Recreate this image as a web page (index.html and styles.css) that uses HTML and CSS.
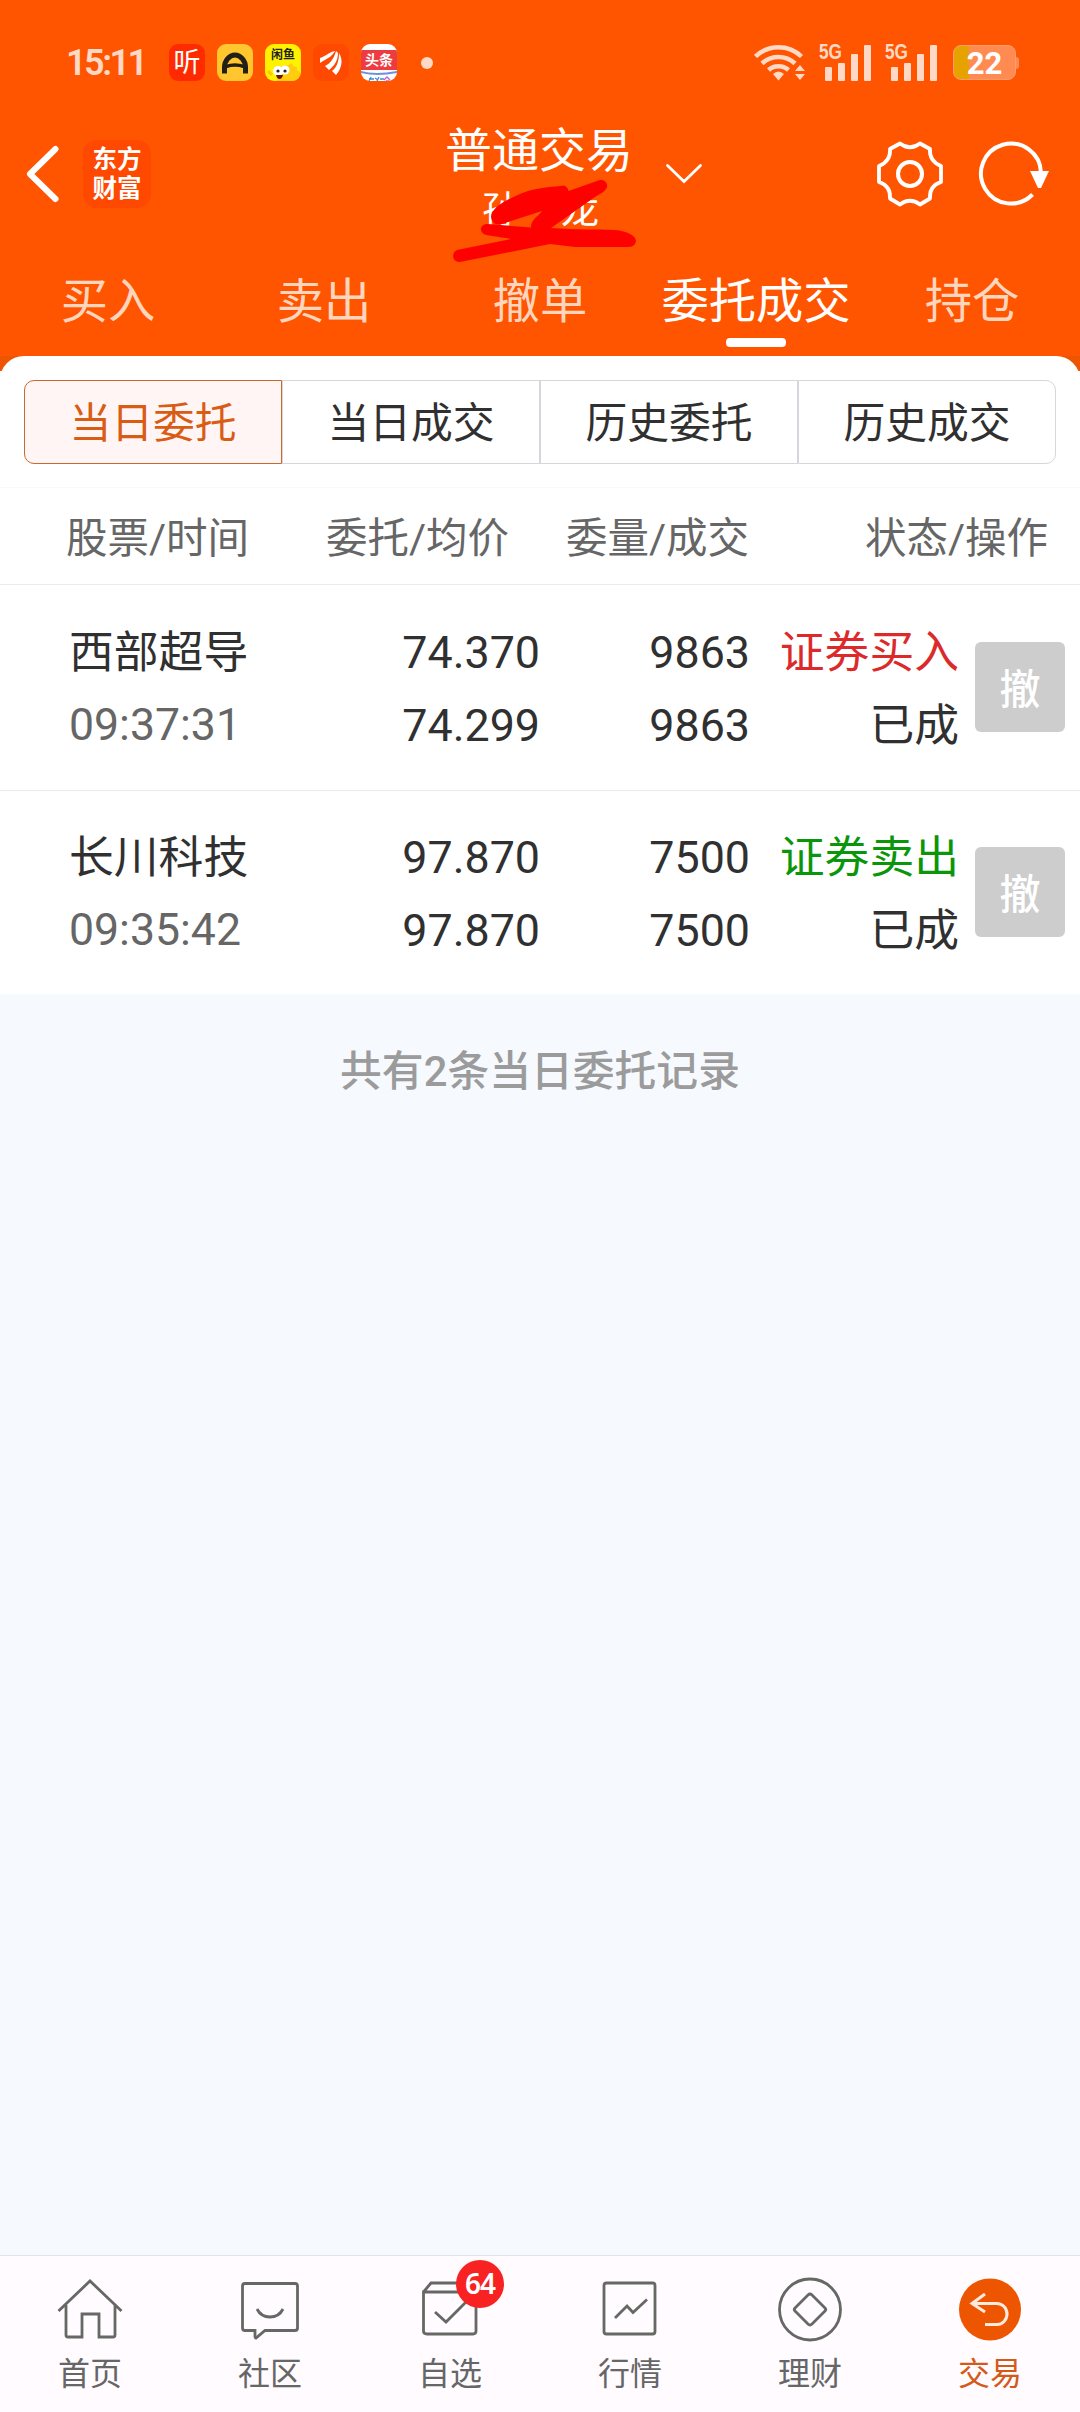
FILE: index.html
```html
<!DOCTYPE html>
<html lang="zh-CN">
<head>
    <meta charset="UTF-8">
    <title>普通交易</title>
    <link rel="stylesheet" href="styles.css">
</head>
<body>
    <div class="app">
        <header class="header">
            <div class="status-bar">
                <span class="clock">15:11</span>
                <div class="app-icons">
                    <span class="app-icon icon-listen">听</span>
                    <svg class="app-icon" viewBox="0 0 36 37">
                        <rect width="36" height="37" fill="#ffc630"/>
                        <path d="M7.500 29.500V23c0-5.500 4.500-12 10.500-12s10.500 6.500 10.500 12v6.500" fill="none" stroke="#222016" stroke-width="5"/>
                        <path d="M9 22.500q9-3 18 0" fill="none" stroke="#222016" stroke-width="3.500"/>
                    </svg>
                    <span class="app-icon icon-fish">
                        <span class="fish-name">闲鱼</span>
                        <svg class="fish-face" viewBox="0 0 36 19">
                            <path d="M12 19C11 7 17 2 24 3l3-2 1 3 4 1v3l3 2v9z" fill="#ffcc10"/>
                            <circle cx="13" cy="9" r="5" fill="#fff"/>
                            <circle cx="20" cy="8" r="4.500" fill="#fff"/>
                            <circle cx="13" cy="9" r="1.600" fill="#222"/>
                            <circle cx="20" cy="9" r="1.600" fill="#222"/>
                            <path d="M11 13h7q-1 4-3.500 4T11 13z" fill="#6b1408"/>
                            <path d="M3 9l4 4" stroke="#ffc400" stroke-width="3"/>
                        </svg>
                    </span>
                    <svg class="app-icon" viewBox="0 0 36 37">
                        <rect width="36" height="37" fill="#ff4800"/>
                        <path d="M7 19v-5c6-2 9-6 15-7-3 6-9 8-15 12z" fill="#fff"/>
                        <path d="M12 22C18 19 21 14 23 7l2 2c0 8-4 13-9 17z" fill="#fff"/>
                        <path d="M19 27c5-4 7-10 7-18 5 8 2 16-3 22z" fill="#fff"/>
                    </svg>
                    <span class="app-icon icon-news">
                        <span class="news-name">头条</span>
                        <svg class="news-wave" viewBox="0 0 36 13">
                            <path d="M0 1q14 4 36 0v2q-20 4-36 0z" fill="#6f8fe0"/>
                            <path d="M8 9h5m-3-2l-2 4m6-3l3 2m1-3l-2 4m3-2h4" stroke="#3b8be0" stroke-width="1.300" fill="none"/>
                            <path d="M23 10l3-3 3 3m-4 1h3" stroke="#c05fd8" stroke-width="1.300" fill="none"/>
                        </svg>
                    </span>
                </div>
                <span class="more-dot"></span>
                <div class="system-icons">
                    <svg class="wifi" viewBox="0 0 51 37">
                        <g fill="none" stroke="#ffd9c5" stroke-width="4.500">
                            <path d="M1.500 12.500a33 33 0 0 1 46 0"/>
                            <path d="M8 19.500a24 24 0 0 1 33 0"/>
                            <path d="M14.500 26a15 15 0 0 1 20 0"/>
                        </g>
                        <path d="M19 30q5.500-5 11 0l-5.500 6.500z" fill="#ffd9c5"/>
                        <path d="M41 27l5-6 5 6zM41 30h10l-5 6z" fill="#ffd9c5"/>
                    </svg>
                    <div class="signal">
                        <span class="network">5G</span>
                        <i class="bar bar-1"></i><i class="bar bar-2"></i><i class="bar bar-3"></i><i class="bar bar-4"></i>
                    </div>
                    <div class="signal">
                        <span class="network">5G</span>
                        <i class="bar bar-1"></i><i class="bar bar-2"></i><i class="bar bar-3"></i><i class="bar bar-4"></i>
                    </div>
                    <div class="battery">22</div>
                </div>
            </div>

            <div class="title-bar">
                <div class="title-left">
                    <svg class="back" viewBox="0 0 34 60">
                        <path d="M29.500 5L4 30l25.500 25" fill="none" stroke="#fff" stroke-width="6" stroke-linecap="round" stroke-linejoin="round"/>
                    </svg>
                    <div class="logo">东方<br>财富</div>
                </div>
                <div class="title">
                    <h1>普通交易</h1>
                    <div class="account"><span>孙</span><span>龙</span></div>
                    <svg class="scribble" viewBox="0 0 210 100">
                        <path d="M51 47C51 38 66 29 88 21C101 17 114 17 124 15.500Q128 17 128.500 21L157 11C163 8 168 12 167 17C166 21 160 24 155 27L111 58C135 60 155 59 175 60C187 61 196 66 196 71Q195 77 188 77H135L110 74L20 92C12 92 11 83 17 80L71 69L46 65C38 63 40 53 48 54L91 57.500C91 49 98 47 102 41L62 54Q52 56 51 47z" fill="#f00"/>
                    </svg>
                </div>
                <div class="title-right">
                    <svg class="chevron" viewBox="0 0 38 22">
                        <path d="M2.500 2.500L19 18.500l16.500-16" fill="none" stroke="#fff" stroke-width="2.800" stroke-linecap="round"/>
                    </svg>
                    <svg class="gear" viewBox="0 0 68 68">
                        <path d="M24 3.500Q34 11 44 3.500L54 9Q53 21 65 26V42Q53 46 54 58.500L44 64.500Q34 57 24 64.500L14 58.500Q15 46 3 42V26Q15 21 14 9z" fill="none" stroke="#fff" stroke-width="3.800" stroke-linejoin="round"/>
                        <circle cx="34" cy="34" r="12" fill="none" stroke="#fff" stroke-width="4"/>
                    </svg>
                    <svg class="refresh" viewBox="0 0 72 68">
                        <path d="M54.500 54.500A30 30 0 1 1 63 33" fill="none" stroke="#fff" stroke-width="4"/>
                        <path d="M52 31h19l-8 17h-3z" fill="#fff"/>
                    </svg>
                </div>
            </div>

            <nav class="tabs">
                <a class="tab">买入</a>
                <a class="tab">卖出</a>
                <a class="tab">撤单</a>
                <a class="tab active">委托成交</a>
                <a class="tab">持仓</a>
            </nav>
        </header>

        <main class="content">
            <section class="card">
                <div class="segments">
                    <a class="segment active">当日委托</a>
                    <a class="segment">当日成交</a>
                    <a class="segment">历史委托</a>
                    <a class="segment">历史成交</a>
                </div>
                <div class="list-head">
                    <span>股票/时间</span>
                    <span>委托/均价</span>
                    <span>委量/成交</span>
                    <span>状态/操作</span>
                </div>
                <div class="order">
                    <div class="cell stock">西部超导<span class="time">09:37:31</span></div>
                    <div class="cell">74.370<span>74.299</span></div>
                    <div class="cell">9863<span>9863</span></div>
                    <div class="cell buy">证券买入<span class="state">已成</span></div>
                    <button class="cancel">撤</button>
                </div>
                <div class="order">
                    <div class="cell stock">长川科技<span class="time">09:35:42</span></div>
                    <div class="cell">97.870<span>97.870</span></div>
                    <div class="cell">7500<span>7500</span></div>
                    <div class="cell sell">证券卖出<span class="state">已成</span></div>
                    <button class="cancel">撤</button>
                </div>
            </section>
            <p class="summary">共有2条当日委托记录</p>
        </main>

        <nav class="bottom-nav">
            <a class="nav-item">
                <svg class="nav-icon" viewBox="0 0 68 68">
                    <path d="M2.500 35L34 5l31.500 30M10 29v30q0 2 2 2h14V38h17v23h14q2 0 2-2V29"/>
                </svg>
                首页
            </a>
            <a class="nav-item">
                <svg class="nav-icon" viewBox="0 0 68 68">
                    <path d="M9 7.500h50q2.500 0 2.500 2.500v42q0 2.500-2.500 2.500H29L20 62q-1 0-1-2v-5.500H9q-2.500 0-2.500-2.500V10q0-2.500 2.500-2.500z"/>
                    <path d="M21 33q4 8 13 8t13-8"/>
                </svg>
                社区
            </a>
            <a class="nav-item">
                <svg class="nav-icon" viewBox="0 0 68 68">
                    <path d="M7.500 16L15 7h45M7.500 16H60v39q0 3-3 3H11q-3.500 0-3.500-3z"/>
                    <path d="M19 36l11 10 21-21"/>
                </svg>
                自选
                <span class="badge">64</span>
            </a>
            <a class="nav-item">
                <svg class="nav-icon" viewBox="0 0 68 68">
                    <rect x="8" y="7" width="51" height="51" rx="2.500"/>
                    <path d="M19 42l12-12 6 6.500 14-13"/>
                </svg>
                行情
            </a>
            <a class="nav-item">
                <svg class="nav-icon" viewBox="0 0 68 68">
                    <circle cx="34" cy="33.500" r="30.500"/>
                    <path d="M32 19L19 32q-1.500 1.500 0 3l13 13q2 2 4 0l13-13q1.500-1.500 0-3L36 19q-2-2-4 0z"/>
                </svg>
                理财
            </a>
            <a class="nav-item active">
                <svg class="nav-icon" viewBox="0 0 68 68">
                    <circle class="disc" cx="34" cy="33.500" r="31"/>
                    <path class="arrow" d="M29 18L16 27.500 29 36M16 27.500h25a10 10.500 0 0 1 0 21H29"/>
                </svg>
                交易
            </a>
        </nav>
    </div>
</body>
</html>
```
FILE: styles.css
```css
* {
    box-sizing: border-box;
}
body {
    margin: 0;
    font-family: Roboto, "Noto Sans CJK SC", sans-serif;
    color: #303030;
    background: #f6faff;
}
svg {
    display: block;
    flex-shrink: 0;
}
.app {
    display: flex;
    flex-direction: column;
    width: 1080px;
    height: 2412px;
}
.header {
    height: 356px;
    background: #ff5500;
    color: #fff;
}

/* 状态栏 */
.status-bar {
    display: flex;
    align-items: center;
    height: 112px;
    padding: 13px 61px 0 66px;
}
.clock {
    width: 103px;
    font-size: 36px;
    font-weight: 600;
    letter-spacing: -2.500px;
    color: #ffd9c5;
}
.app-icons {
    display: flex;
    gap: 12px;
}
.app-icon {
    display: block;
    width: 36px;
    height: 37px;
    border-radius: 9px;
    overflow: hidden;
    text-align: center;
}
.icon-listen {
    background: #ff2a00;
    font-size: 27px;
    line-height: 38px;
}
.icon-fish {
    background: #fff200;
    color: #222;
}
.fish-name {
    display: block;
    height: 18px;
    font-size: 12px;
    font-weight: 700;
    line-height: 22px;
}
.fish-face {
    width: 36px;
    height: 19px;
}
.icon-news {
    padding-top: 6px;
    background: #fff;
}
.news-name {
    display: block;
    height: 20px;
    background: #ee3b42;
    font-size: 14px;
    font-weight: 700;
    line-height: 20px;
}
.news-wave {
    width: 36px;
    height: 13px;
}
.more-dot {
    width: 12px;
    height: 12px;
    margin-left: 24px;
    border-radius: 50%;
    background: #ffd9c5;
}
.system-icons {
    display: flex;
    align-items: center;
    margin-left: auto;
}
.wifi {
    width: 51px;
    height: 37px;
}
.signal {
    position: relative;
    display: flex;
    align-items: flex-end;
    gap: 6px;
    width: 52px;
    height: 37px;
    margin-left: 14px;
    padding-left: 6px;
}
.network {
    position: absolute;
    left: 0;
    top: -3px;
    font-family: "Liberation Sans", sans-serif;
    font-size: 22px;
    font-weight: 700;
    line-height: 22px;
    color: #ffd9c5;
    transform: scaleX(0.78);
    transform-origin: left;
}
.bar {
    width: 7px;
    border-radius: 1px;
    background: #ffd9c5;
}
.bar-1 {
    height: 14px;
}
.bar-2 {
    height: 18px;
}
.bar-3 {
    height: 27px;
}
.bar-4 {
    height: 36px;
}
.battery {
    position: relative;
    width: 63px;
    height: 35px;
    margin-left: 16px;
    margin-right: 3px;
    border: 1px solid #ff9c6c;
    border-radius: 8px;
    background: linear-gradient(90deg, #e6a300 15px, #ff8b52 15px);
    font-size: 31px;
    font-weight: 700;
    line-height: 35px;
    text-align: center;
}
.battery::after {
    content: "";
    position: absolute;
    right: -4px;
    top: 11px;
    width: 3px;
    height: 12px;
    border-radius: 0 3px 3px 0;
    background: #ff8b52;
}

/* 标题栏 */
.title-bar {
    display: grid;
    grid-template-columns: 445px 188px 447px;
    height: 124px;
}
.title-left,
.title-right {
    display: flex;
    align-items: center;
}
.back {
    width: 34px;
    height: 60px;
    margin-left: 26px;
}
.logo {
    display: flex;
    align-items: center;
    justify-content: center;
    width: 68px;
    height: 68px;
    margin-left: 23px;
    border-radius: 14px;
    background: #ff4800;
    font-size: 24.500px;
    font-weight: 700;
    line-height: 29px;
}
.title {
    position: relative;
    text-align: center;
}
.title h1 {
    margin: 12px 0 0;
    font-size: 47px;
    font-weight: 400;
    line-height: 54px;
    white-space: nowrap;
}
.account {
    display: flex;
    justify-content: space-between;
    margin: 10px 34px 0 37px;
    font-size: 38px;
    line-height: 44px;
}
.scribble {
    position: absolute;
    left: -5px;
    top: 58px;
    width: 210px;
    height: 100px;
}
.chevron {
    width: 38px;
    height: 22px;
    margin-left: 32px;
}
.gear {
    width: 68px;
    height: 68px;
    margin-left: 173px;
}
.refresh {
    width: 72px;
    height: 68px;
    margin-left: 34px;
}

/* 交易标签 */
.tabs {
    display: grid;
    grid-template-columns: repeat(5, 1fr);
    height: 120px;
}
.tab {
    display: flex;
    flex-direction: column;
    align-items: center;
    padding-top: 36px;
    font-size: 47.300px;
    line-height: 60px;
    color: #ffd5bd;
}
.tab.active {
    color: #fff;
}
.tab.active::after {
    content: "";
    width: 60px;
    height: 9px;
    margin-top: 6px;
    border-radius: 4px;
    background: #fff;
}

/* 委托列表 */
.content {
    flex: 1;
    background: linear-gradient(#ee5500 15px, #f6faff 15px);
}
.card {
    height: 638px;
    padding-top: 24px;
    border-radius: 24px 24px 0 0;
    background: #fff;
}
.segments {
    display: grid;
    grid-template-columns: repeat(4, 1fr);
    height: 84px;
    margin: 0 24px;
}
.segment {
    padding-top: 4px;
    border: 1px solid #d6d6dc;
    font-size: 41.800px;
    line-height: 78px;
    text-align: center;
}
.segment:first-child {
    border-radius: 10px 0 0 10px;
}
.segment:last-child {
    border-radius: 0 10px 10px 0;
}
.segment.active {
    border-color: #c46a32;
    background: #fff5f5;
    color: #d95c14;
}
.list-head {
    display: grid;
    grid-template-columns: 249px 260px 240px 299px;
    height: 98px;
    margin-top: 23px;
    border-top: 1px solid #f9f9f9;
    border-bottom: 1px solid #ebebeb;
    font-size: 41.500px;
    line-height: 101px;
    text-align: right;
    color: #666;
}
.order {
    display: grid;
    grid-template-columns: 180px 291px 210px 209px 90px;
    height: 205px;
    padding: 31px 0 0 69px;
}
.order + .order {
    padding-top: 30px;
    border-top: 1px solid #ebebeb;
}
.cell {
    font-size: 44.800px;
    line-height: 73px;
    text-align: right;
    white-space: nowrap;
}
.cell span {
    display: block;
}
.stock {
    text-align: left;
}
.cell .time {
    font-size: 44.600px;
    color: #666;
}
.buy {
    color: #dc2a2a;
}
.sell {
    color: #0a960a;
}
.state {
    color: #303030;
}
.cancel {
    width: 90px;
    height: 90px;
    margin: 26px 0 0 16px;
    padding: 0 0 2px;
    border: 0;
    border-radius: 6px;
    background: #cdcdcd;
    color: #fff;
    font-family: inherit;
    font-size: 41px;
    font-weight: 500;
}
.summary {
    margin: 48px 0 0;
    font-size: 41.800px;
    font-weight: 500;
    line-height: 60px;
    text-align: center;
    color: #9b9b9b;
}

/* 底部导航 */
.bottom-nav {
    display: grid;
    grid-template-columns: repeat(6, 1fr);
    height: 157px;
    border-top: 1px solid #e4e2e4;
    background: #fffbff;
}
.nav-item {
    position: relative;
    display: flex;
    flex-direction: column;
    align-items: center;
    padding-top: 20px;
    font-size: 32px;
    line-height: 46px;
    color: #666;
}
.nav-icon {
    width: 68px;
    height: 68px;
    margin-bottom: 7px;
    fill: none;
    stroke: #666864;
    stroke-width: 2.800;
}
.nav-item.active {
    color: #d45a1a;
}
.nav-icon .disc {
    fill: #ee5500;
    stroke: none;
}
.nav-icon .arrow {
    stroke: #ffeadd;
    stroke-width: 3;
}
.badge {
    position: absolute;
    left: 96px;
    top: 4px;
    width: 48px;
    height: 48px;
    border-radius: 50%;
    background: #f82222;
    color: #fff;
    font-family: "Noto Sans", sans-serif;
    font-size: 28px;
    font-weight: 600;
    line-height: 47px;
    letter-spacing: -1px;
    text-align: center;
}
```
